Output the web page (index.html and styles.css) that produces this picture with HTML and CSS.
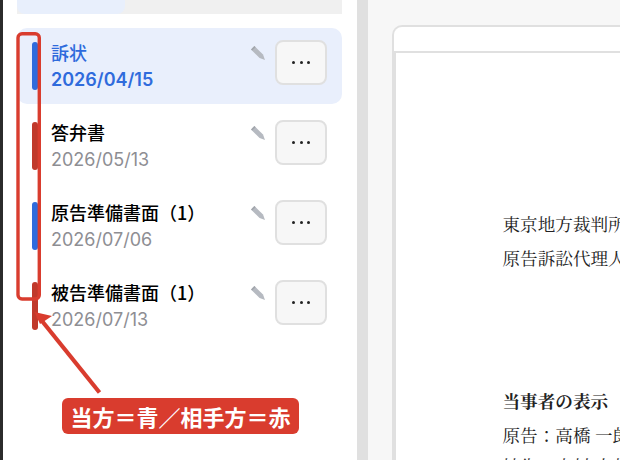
FILE: index.html
```html
<!DOCTYPE html>
<html lang="ja">
<head>
<meta charset="utf-8">
<title>書面一覧</title>
<link rel="stylesheet" href="styles.css">
</head>
<body>
<div class="app">
  <div class="edge"></div>
  <aside class="sidebar">
    <div class="tabs"><div class="tab-active"></div></div>
    <ul class="list">
      <li class="row active">
        <span class="bar blue"></span>
        <div class="info"><div class="title">訴状</div><div class="date">2026/04/15</div></div>
        <svg class="pencil" viewBox="0 0 14 14"><path d="M0 3.4 L3.4 0 L12 8.6 L14 14 L8.6 12 Z" fill="#b6bac1"/><path d="M0 3.4 L3.4 0 L4.6 1.2 L1.2 4.6 Z" fill="#a2a6ac"/></svg>
        <button class="more"><span class="dot"></span><span class="dot"></span><span class="dot"></span></button>
      </li>
      <li class="row">
        <span class="bar red"></span>
        <div class="info"><div class="title">答弁書</div><div class="date">2026/05/13</div></div>
        <svg class="pencil" viewBox="0 0 14 14"><path d="M0 3.4 L3.4 0 L12 8.6 L14 14 L8.6 12 Z" fill="#b6bac1"/><path d="M0 3.4 L3.4 0 L4.6 1.2 L1.2 4.6 Z" fill="#a2a6ac"/></svg>
        <button class="more"><span class="dot"></span><span class="dot"></span><span class="dot"></span></button>
      </li>
      <li class="row">
        <span class="bar blue"></span>
        <div class="info"><div class="title">原告準備書面（1）</div><div class="date">2026/07/06</div></div>
        <svg class="pencil" viewBox="0 0 14 14"><path d="M0 3.4 L3.4 0 L12 8.6 L14 14 L8.6 12 Z" fill="#b6bac1"/><path d="M0 3.4 L3.4 0 L4.6 1.2 L1.2 4.6 Z" fill="#a2a6ac"/></svg>
        <button class="more"><span class="dot"></span><span class="dot"></span><span class="dot"></span></button>
      </li>
      <li class="row">
        <span class="bar red"></span>
        <div class="info"><div class="title">被告準備書面（1）</div><div class="date">2026/07/13</div></div>
        <svg class="pencil" viewBox="0 0 14 14"><path d="M0 3.4 L3.4 0 L12 8.6 L14 14 L8.6 12 Z" fill="#b6bac1"/><path d="M0 3.4 L3.4 0 L4.6 1.2 L1.2 4.6 Z" fill="#a2a6ac"/></svg>
        <button class="more"><span class="dot"></span><span class="dot"></span><span class="dot"></span></button>
      </li>
    </ul>
  </aside>
  <div class="divider"></div>
  <main class="viewer">
    <div class="paper-head"></div>
    <div class="paper">
      <p class="line first">東京地方裁判所</p>
      <p class="line">原告訴訟代理人</p>
      <p class="line heading">当事者の表示</p>
      <p class="line">原告：高橋 一郎</p>
      <p class="line tight">被告：木村 太郎</p>
    </div>
  </main>
</div>
<svg class="marks" viewBox="0 0 620 460">
  <rect x="18" y="33.8" width="21.3" height="265.2" rx="4" fill="none" stroke="#d93c2e" stroke-width="3.4"/>
  <path d="M99.5 392.5 L38 316" fill="none" stroke="#d93c2e" stroke-width="4.2"/>
  <path d="M34.5 312 L52 316 L40 324 Z" fill="#d93c2e"/>
</svg>
<div class="note">当方＝青／相手方＝赤</div>
</body>
</html>
```
FILE: styles.css
```css
* { box-sizing: border-box; }
html, body { margin: 0; height: 100%; overflow: hidden; background: #fff; }
body { font-family: Inter, "Noto Sans CJK JP", sans-serif; }

.app { display: flex; width: 620px; height: 460px; overflow: hidden; }
.edge { width: 3px; background: #2b2b2b; flex: none; }

.sidebar { width: 354px; flex: none; padding: 0 15px 0 14px; background: #fff; }
.tabs { height: 14px; background: #f0f0f0; }
.tab-active { width: 108px; height: 14px; background: #e8effc; border-bottom-right-radius: 8px; border-bottom-left-radius: 8px; }

.list { list-style: none; margin: 14px 0 0; padding: 0; }
.row { display: flex; align-items: flex-start; height: 76px; margin-bottom: 4px; padding: 12px 15px 0; border-radius: 10px; }
.row.active { background: #e9effc; }
.bar { width: 6px; height: 48px; margin-top: 2px; border-radius: 3px; flex: none; }
.bar.blue { background: #2f6bdc; }
.bar.red { background: #c0392b; }

.info { margin-left: 13px; flex: 1; min-width: 0; }
.title { font-size: 18px; line-height: 26px; font-weight: 500; color: #000; font-family: "Noto Sans CJK JP", sans-serif; margin-top: -1px; }
.date { font-size: 18px; line-height: 26px; color: #8e8e93; margin-top: 2px; }
.active .title, .active .date { color: #2f6bdc; }
.active .date { font-weight: 600; }

.pencil { width: 14px; height: 14px; margin: 6px 10px 0 0; flex: none; }
.more { display: flex; align-items: center; justify-content: center; gap: 4.5px; width: 52px; height: 45px; flex: none; border: 2px solid #e0e0e0; border-radius: 8px; background: #f7f7f7; padding: 0; }
.dot { width: 3px; height: 3px; border-radius: 50%; background: #222; }

.divider { width: 11px; background: #e0e0e0; flex: none; }

.viewer { flex: 1; min-width: 0; background: #f7f7f7; padding: 25px 0 0 24px; display: flex; flex-direction: column; }
.paper-head { width: 260px; height: 28px; background: #fff; border: solid #e0e0e0; border-width: 2px 0 2px 2px; border-top-left-radius: 10px; flex: none; }
.paper { flex: 1; width: 260px; background: #fff; border-left: 4px solid #e0e0e0; padding-left: 106.5px; font-family: "Noto Serif CJK JP", "Noto Sans CJK JP", serif; font-size: 17.6px; color: #222; white-space: nowrap; overflow: hidden; }
.line { margin: 0; height: 34px; line-height: 34px; }
.line.first { margin-top: 154px; }
.line.heading { margin-top: 109px; font-weight: 700; }
.line.tight { margin-top: -3px; }

.marks { position: absolute; left: 0; top: 0; width: 620px; height: 460px; pointer-events: none; }
.note { position: absolute; left: 62px; top: 398px; width: 237px; height: 36px; background: #d93c2e; border-radius: 6px; color: #fff; font: 700 22px/36px "Noto Sans CJK JP", sans-serif; text-align: center; white-space: nowrap; }
```
